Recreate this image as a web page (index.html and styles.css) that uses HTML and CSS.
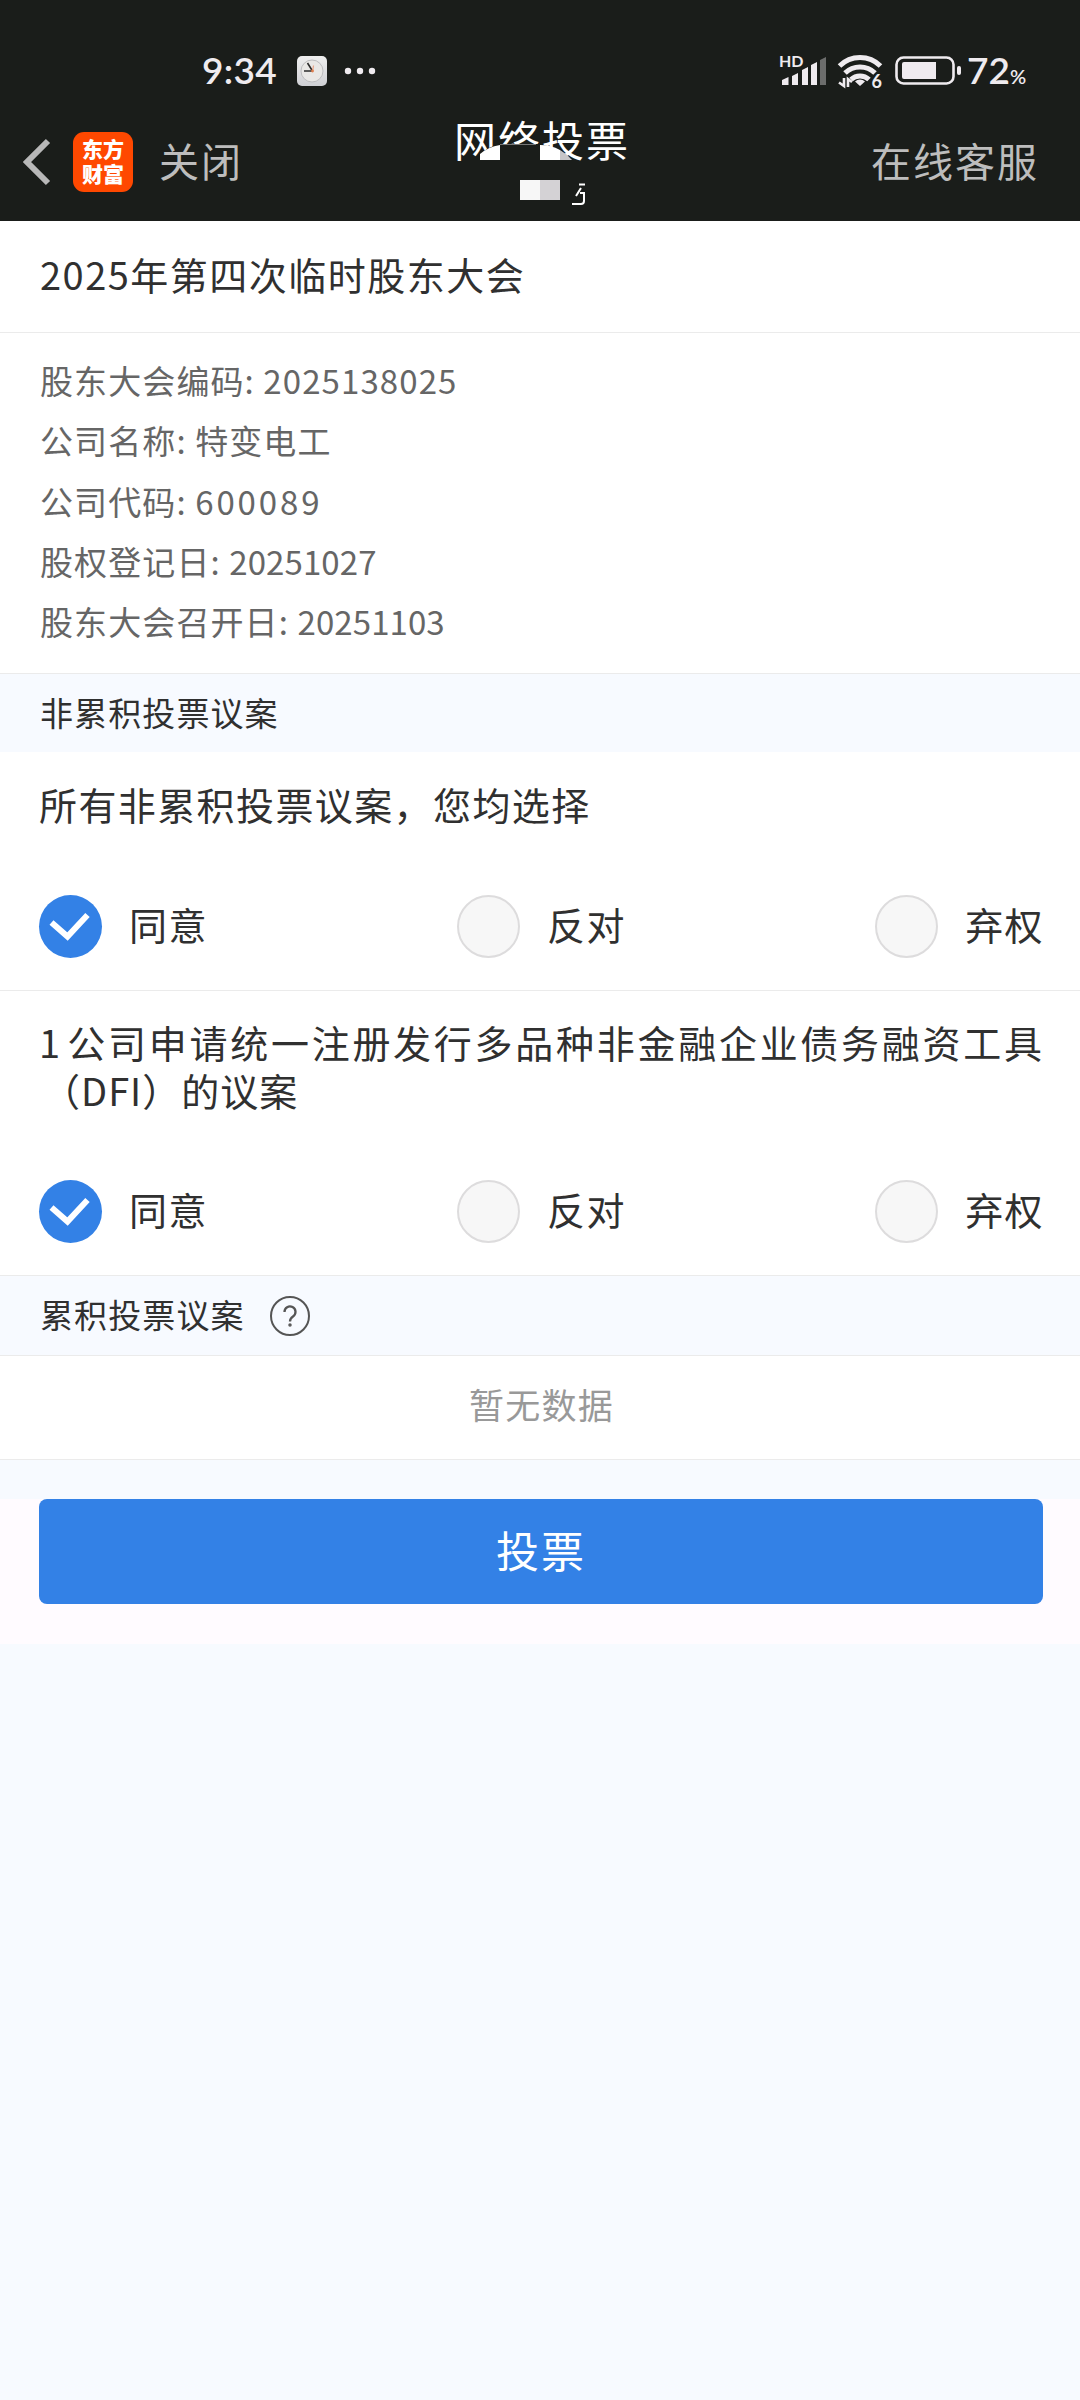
FILE: index.html
```html
<!doctype html>
<html lang="zh-CN">
<head>
    <meta charset="UTF-8">
    <title>网络投票</title>
    <link rel="stylesheet" href="styles.css">
</head>
<body>
<header>
    <div class="status">
        <div class="status_left">
            <span class="time">9:34</span>
            <svg class="clock" width="30" height="30" viewBox="0 0 30 30">
                <defs>
                    <linearGradient id="face" x1="0" y1="0" x2="0" y2="1">
                        <stop offset="0" stop-color="#efefef"/>
                        <stop offset="1" stop-color="#cfd0d4"/>
                    </linearGradient>
                </defs>
                <rect width="30" height="30" rx="5" fill="url(#face)"/>
                <circle cx="15" cy="15" r="11" fill="#e9e8e6" stroke="#bdbdbf"/>
                <path d="M15.500 15H7M15.500 15L10.500 7" stroke="#2c2c2c" stroke-width="1.600"/>
                <path d="M15.500 16L16.500 9.500" stroke="#e9a184" stroke-width="1.200"/>
                <circle cx="15.500" cy="15" r="1.400" fill="#e08050"/>
            </svg>
            <svg class="dots" width="32" height="8" viewBox="0 0 32 8" fill="#efebef">
                <circle cx="4" cy="4" r="3.200"/><circle cx="16" cy="4" r="3.200"/><circle cx="28" cy="4" r="3.200"/>
            </svg>
        </div>
        <div class="status_right">
            <svg width="184" height="40" viewBox="778 51 184 40">
                <text x="779" y="67" class="hd">HD</text>
                <g fill="#efebef">
                    <path d="M782 80l6.500-3v8h-6.500zM792 76l6-3v12h-6zM802 70l6-3v18h-6zM811 65l6-3v23h-6z"/>
                    <path fill="#6c6d6c" d="M820 60l6-3v28h-6z"/>
                </g>
                <g fill="none" stroke="#efebef" stroke-width="5">
                    <path d="M839.500 66a29 29 0 0 1 41 0M845 73a21.500 21.500 0 0 1 30 0M851 79.500a13 13 0 0 1 18 0"/>
                </g>
                <path d="M860 86l-5-4.500a7.500 7.500 0 0 1 10 0z" fill="#efebef"/>
                <path d="M844 78v8l-5-3.500M848 87v-8l4 3" fill="none" stroke="#efebef" stroke-width="2.600"/>
                <text x="871.500" y="87.500" class="six">6</text>
                <rect x="896.500" y="57.500" width="57" height="26" rx="7" fill="none" stroke="#efebef" stroke-width="2.600"/>
                <path d="M904 62h32v17h-32q-2 0-2-2v-13q0-2 2-2z" fill="#efebef"/>
                <rect x="957" y="66" width="4" height="9" rx="2" fill="#efebef"/>
            </svg>
            <span class="battery">72<small>%</small></span>
        </div>
    </div>
    <nav>
        <div class="nav_left">
            <svg class="back" width="30" height="50" viewBox="0 0 30 50">
                <path d="M25 4L4 25l21 21" fill="none" stroke="#b8b8b8" stroke-width="6"/>
            </svg>
            <div class="logo">东方<br>财富</div>
            <a class="close">关闭</a>
        </div>
        <h1>网络投票
            <svg class="mask" width="120" height="70" viewBox="475 140 120 70">
                <path d="M480 160v-6q8-7 20-10h40q15 3 32 16v1h-92z" fill="#1a1d1a"/>
                <path d="M500 144.500h36" stroke="#777"/>
                <path d="M480 160v-6q8-7 20-9v15zM540 145q11 0 20 5v10h-20z" fill="#fff"/>
                <path d="M560 150q7 4 12 10h-12z" fill="#c6c5c8"/>
                <path d="M520 180h20v20h-20z" fill="#f7f7f7"/>
                <path d="M540 180h20v20h-20z" fill="#d4d2d5"/>
                <path d="M579 184.500h6M581 188l-5 8M580 193h4v8q0 3-3 3h-9" fill="none" stroke="#fff" stroke-width="2"/>
            </svg>
        </h1>
        <a class="service">在线客服</a>
    </nav>
</header>

<h2>2025年第四次临时股东大会</h2>
<ul class="info">
    <li>股东大会编码: 2025138025</li>
    <li>公司名称: 特变电工</li>
    <li>公司代码: <span class="code">600089</span></li>
    <li>股权登记日: <span class="date">20251027</span></li>
    <li>股东大会召开日: <span class="date">20251103</span></li>
</ul>

<div class="bar">非累积投票议案</div>
<form>
    <div class="item">
        <p>所有非累积投票议案，您均选择</p>
        <div class="options">
            <label class="on"><i><svg viewBox="0 0 63 63"><path d="M12.500 27.500l16 14 20-21.500"/></svg></i><span>同意</span></label>
            <label><i></i><span>反对</span></label>
            <label><i></i><span>弃权</span></label>
        </div>
    </div>
    <div class="item">
        <p class="long"><span class="line">1 公司申请统一注册发行多品种非金融企业债务融资工具</span><span class="line2">（DFI）的议案</span></p>
        <div class="options">
            <label class="on"><i><svg viewBox="0 0 63 63"><path d="M12.500 27.500l16 14 20-21.500"/></svg></i><span>同意</span></label>
            <label><i></i><span>反对</span></label>
            <label><i></i><span>弃权</span></label>
        </div>
    </div>
    <div class="bar bar_line"><span>累积投票议案</span>
        <svg class="help" width="42" height="42" viewBox="0 0 42 42" fill="none" stroke="#555">
            <circle cx="21" cy="21" r="19" stroke-width="2"/>
            <path d="M15.500 17a5.500 5.500 0 1 1 8.500 4.500q-3 2-3 5" stroke-width="2.300"/>
            <circle cx="21" cy="30" r="1" stroke-width="1.500"/>
        </svg>
    </div>
    <div class="empty">暂无数据</div>
    <div class="submit">
        <button type="button">投票</button>
    </div>
</form>
</body>
</html>
```
FILE: styles.css
```css
*{box-sizing:border-box;margin:0;padding:0;}
body{background:#f7faff;color:#303030;font-family:"Noto Sans CJK SC",sans-serif;font-size:38px;font-weight:400;}
svg{display:block;flex:none;}
header{height:221px;background:#1a1d1a;color:#bdbdbd;}
/*状态栏*/
.status{height:114px;padding:28px 55px 0 202px;display:flex;justify-content:space-between;color:#efebef;font-family:Lato,"Noto Sans",sans-serif;font-weight:600;}
.status_left,.status_right{display:flex;align-items:center;height:86px;}
.time{width:95px;padding-bottom:3px;font-size:37px;letter-spacing:0.3px;}
.dots{margin-left:17px;}
.hd{font:bold 16px Lato,sans-serif;fill:#efebef;}
.six{font:bold 18px Lato,sans-serif;fill:#efebef;}
.battery{width:58px;margin-left:5px;padding-bottom:3px;font-size:37px;white-space:nowrap;}
.battery small{font-size:20px;}
/*导航栏*/
nav{height:96px;display:grid;grid-template-columns:1fr 180px 1fr;align-items:center;font-size:40px;letter-spacing:2px;}
.nav_left{display:flex;align-items:center;padding-left:23px;}
.logo{width:60px;height:60px;margin:0 26px 0 20px;padding-top:4px;border-radius:11px;background:#ff4800;color:#fff;font-size:21px;line-height:25px;font-weight:900;letter-spacing:0;text-align:center;}
.close,.service{padding-bottom:5px;}
h1{position:relative;height:96px;line-height:50px;color:#fff;font-size:42px;font-weight:400;letter-spacing:2px;white-space:nowrap;padding-left:4px;}
.mask{position:absolute;left:25px;top:26px;}
.service{justify-self:end;padding-right:41px;}
/*会议信息*/
h2{height:112px;padding-left:40px;background:#fff;border-bottom:1px solid #ebebeb;font-size:38px;line-height:105px;font-weight:400;letter-spacing:1.5px;}
.info{height:341px;padding:17px 40px 0;background:#fff;border-bottom:1px solid #ebebeb;list-style:none;color:#666;font-size:33px;line-height:60.3px;letter-spacing:1.1px;}
.code{letter-spacing:2.9px;}
.date{letter-spacing:0.1px;}
.bar{height:78px;padding:0 0 3px 40px;display:flex;align-items:center;font-size:33px;letter-spacing:1.1px;}
.bar_line{height:80px;padding-bottom:0;border-bottom:1px solid #ebebeb;}
.bar_line span{padding-bottom:3px;}
.help{margin-left:24px;}
/*议案*/
.item{padding:28px 39px 32px;background:#fff;border-bottom:1px solid #ebebeb;letter-spacing:1.4px;}
.item p{height:115px;line-height:48px;}
.item .long{height:161px;margin-top:-1px;margin-bottom:1px;}
.line{display:block;text-align-last:justify;letter-spacing:1px;word-spacing:-5px;white-space:nowrap;margin-right:-2px;}
.line2{display:block;padding-left:3px;letter-spacing:1px;}
.options{height:63px;margin-right:-3px;display:flex;justify-content:space-between;}
.options label{display:flex;align-items:center;}
.options span{padding-bottom:6px;}
.options i{width:63px;height:63px;margin-right:27px;border:2px solid #dddcdd;border-radius:50%;background:#f7f7f7;}
.options .on i{border:0;background:#3381e6;}
.on path{fill:none;stroke:#fff;stroke-width:6;}
.empty{height:104px;padding-left:3px;background:#fff;border-bottom:1px solid #ebebeb;color:#999;font-size:35px;line-height:96px;letter-spacing:1.3px;text-align:center;}
.submit{height:145px;margin-top:39px;padding:0 37px 0 39px;background:#fffbff;}
.submit button{display:block;width:100%;height:105px;padding-bottom:6px;border:0;border-radius:8px;background:#3381e6;color:#fff;font:400 43px "Noto Sans CJK SC",sans-serif;letter-spacing:2px;}
```
